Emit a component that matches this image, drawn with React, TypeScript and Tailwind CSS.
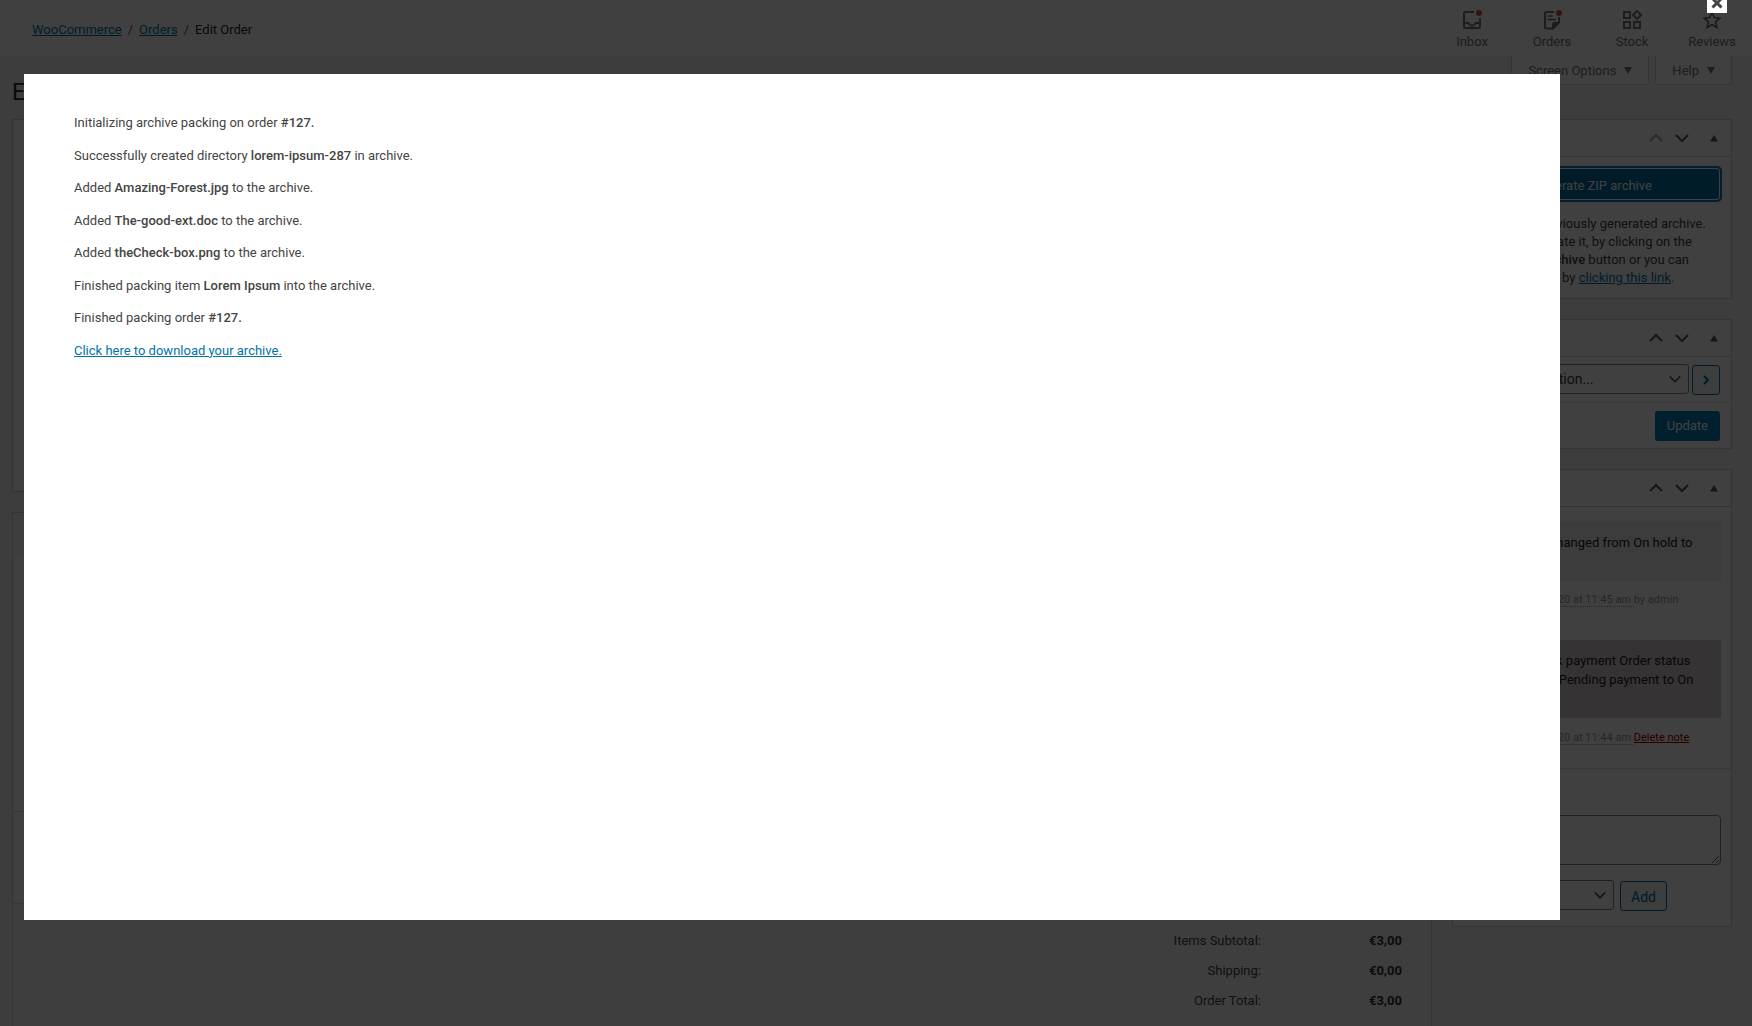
import type { ReactNode } from "react";

const log = [
  { before: "Initializing archive packing on order ", name: "#127.", after: "" },
  { before: "Successfully created directory ", name: "lorem-ipsum-287", after: " in archive." },
  { before: "Added ", name: "Amazing-Forest.jpg", after: " to the archive." },
  { before: "Added ", name: "The-good-ext.doc", after: " to the archive." },
  { before: "Added ", name: "theCheck-box.png", after: " to the archive." },
  { before: "Finished packing item ", name: "Lorem Ipsum", after: " into the archive." },
  { before: "Finished packing order ", name: "#127.", after: "" }
];

const totals = [
  { label: "Items Subtotal:", value: "€3,00" },
  { label: "Shipping:", value: "€0,00" },
  { label: "Order Total:", value: "€3,00" }
];

function InboxIcon() {
  return (
    <svg width="20" height="20" viewBox="0 0 20 20" fill="none" stroke="currentColor" strokeWidth="2">
      <path d="M12 2H3.5Q2 2 2 3.5V16.5Q2 18 3.5 18H16.5Q18 18 18 16.5V8" />
      <path d="M2 13H6.5Q7.5 15.5 10 15.5T13.5 13H18" />
      <circle cx="17" cy="3" r="3" fill="#d94f4f" stroke="none" />
    </svg>
  );
}

function OrdersIcon() {
  return (
    <svg width="20" height="20" viewBox="0 0 20 20" fill="none" stroke="currentColor" strokeWidth="2">
      <path d="M12 2H4.5Q3 2 3 3.5V17Q3 18.5 4.5 18.5H11" />
      <path d="M17 7V13" />
      <path d="M18 12V13L11.5 19.5H10V14Q10 12 12 12Z" fill="currentColor" stroke="none" />
      <path d="M5.5 6H10.5M5.5 9.5H14" strokeWidth="1.5" />
      <circle cx="17" cy="3" r="3" fill="#d94f4f" stroke="none" />
    </svg>
  );
}

function StockIcon() {
  return (
    <svg width="20" height="20" viewBox="0 0 20 20" fill="none" stroke="currentColor" strokeWidth="2">
      <rect x="2" y="2" width="6" height="6" />
      <rect x="2" y="12" width="6" height="6" />
      <rect x="12" y="12" width="6" height="6" />
      <path d="M15 1L19 5L15 9L11 5Z" />
    </svg>
  );
}

function ReviewsIcon() {
  return (
    <svg width="20" height="20" viewBox="0 0 20 20" fill="none" stroke="currentColor" strokeWidth="1.8">
      <path d="M10 2.5L12.3 7.6L17.8 8.2L13.7 11.9L14.9 17.4L10 14.6L5.1 17.4L6.3 11.9L2.2 8.2L7.7 7.6Z" />
    </svg>
  );
}

function Chevron({ direction, className = "" }: { direction: "up" | "down" | "right"; className?: string }) {
  const paths = {
    up: "M2 11L8 5L14 11",
    down: "M2 5L8 11L14 5",
    right: "M6 4L10 8L6 12"
  };
  return (
    <svg width="16" height="16" viewBox="0 0 16 16" fill="none" stroke="currentColor" strokeWidth="2" className={className}>
      <path d={paths[direction]} />
    </svg>
  );
}

function Triangle({ down = false }: { down?: boolean }) {
  return (
    <svg width="8" height="7" viewBox="0 0 8 7" fill="currentColor" className="shrink-0">
      <path d={down ? "M0 0H8L4 7Z" : "M0 6.5H8L4 0Z"} />
    </svg>
  );
}

const activity = [
  { label: "Inbox", icon: <InboxIcon /> },
  { label: "Orders", icon: <OrdersIcon /> },
  { label: "Stock", icon: <StockIcon /> },
  { label: "Reviews", icon: <ReviewsIcon /> }
];

function Panel({ title, first = false, children }: { title: string; first?: boolean; children: ReactNode }) {
  return (
    <section className="border border-[#ccd0d4] bg-white">
      <header className="flex h-[37px] items-center border-b border-[#ccd0d4] pl-3 pr-[13px]">
        <h2 className="flex-1 text-sm font-semibold text-[#23282d]">{title}</h2>
        <button aria-label="Move up" className={first ? "mr-[10px] text-[#a0a5aa]" : "mr-[10px] text-[#50575e]"}>
          <Chevron direction="up" />
        </button>
        <button aria-label="Move down" className="mr-5 text-[#50575e]">
          <Chevron direction="down" />
        </button>
        <button aria-label="Toggle panel" className="text-[#50575e]">
          <Triangle />
        </button>
      </header>
      {children}
    </section>
  );
}

function Select({ label, className, children }: { label: string; className: string; children: ReactNode }) {
  return (
    <div className={`grid ${className}`}>
      <select
        aria-label={label}
        className="col-start-1 row-start-1 h-[30px] appearance-none rounded-[3px] border border-[#7e8993] bg-white pl-2 text-sm text-[#32373c]"
      >
        {children}
      </select>
      <Chevron
        direction="down"
        className="pointer-events-none col-start-1 row-start-1 mr-[7px] h-[14px] w-[14px] self-center justify-self-end text-[#555555]"
      />
    </div>
  );
}

function Sidebar() {
  return (
    <aside className="flex w-[280px] shrink-0 flex-col gap-5">
      <Panel title="Order files" first>
        <div className="px-[11px] pb-[11px] pt-[11px]">
          <button className="h-8 w-full rounded-[3px] border border-white bg-[#0071a1] pt-[3px] text-[13px] text-white ring-2 ring-[#007cba]">
            Generate ZIP archive
          </button>
          <p className="mt-[15px] whitespace-nowrap leading-[18px]">
            There is one previously generated archive.
            <br />
            You can regenerate it, by clicking on the
            <br />
            <b className="font-medium">Generate ZIP archive</b> button or you can
            <br />
            also download it by{" "}
            <a href="#archive" className="text-[#0073aa] underline">clicking this link</a>.
          </p>
        </div>
      </Panel>

      <Panel title="Order actions">
        <div className="flex h-[46px] items-start gap-[3px] border-b border-[#dddddd] pl-3 pr-[11px] pt-[7px]">
          <Select label="Order action" className="flex-1">
            <option>Choose an action...</option>
          </Select>
          <button
            aria-label="Apply action"
            className="mt-px flex h-[30px] w-7 items-center justify-center rounded-[3px] border border-[#0071a1] bg-[#f3f5f6] text-[#0071a1]"
          >
            <Chevron direction="right" />
          </button>
        </div>
        <div className="flex h-[45px] items-center justify-between pl-3 pr-[11px]">
          <a href="#trash" className="text-[#a00] underline">Move to Trash</a>
          <button className="h-[30px] rounded-[3px] bg-[#007cba] px-3 pt-px text-[13px] text-white">Update</button>
        </div>
      </Panel>

      <Panel title="Order notes">
        <ul className="px-[10px] pt-[15px]">
          <li>
            <div className="h-[59px] bg-[#efefef] px-3 py-[11px] leading-5 text-[#222222]">
              Order status changed from On hold to
              <br />
              Processing.
            </div>
            <p className="mt-[11px] h-12 px-3 text-[11px] leading-4 text-[#999999]">
              <abbr className="border-b border-dotted border-[#999999]">November 18, 2020 at 11:45 am </abbr>by admin
            </p>
          </li>
          <li>
            <div className="h-[78px] bg-[#d7cad2] px-3 py-[11px] leading-[19px] text-[#222222]">
              Awaiting check payment Order status
              <br />
              changed from Pending payment to On
              <br />
              hold.
            </div>
            <p className="mt-3 h-[38px] px-3 text-[11px] leading-4 text-[#999999]">
              <abbr className="border-b border-dotted border-[#999999]">November 18, 2020 at 11:44 am </abbr>
              <a href="#delete-note" className="text-[#a00] underline">Delete note</a>
            </p>
          </li>
        </ul>
        <div className="border-t border-[#dddddd] px-[10px] pb-[15px] pt-4">
          <label htmlFor="note" className="block h-[30px] leading-5">Add note</label>
          <textarea id="note" className="block h-[50px] w-full resize rounded border border-[#7e8993] bg-white" />
          <div className="mt-[15px] flex items-start gap-[6px]">
            <Select label="Note type" className="w-[151px]">
              <option value="">Private note</option>
            </Select>
            <button className="mt-px h-[30px] rounded-[3px] border border-[#0071a1] bg-[#f3f5f6] px-[10px] pt-[2px] text-sm text-[#0071a1]">
              Add
            </button>
          </div>
        </div>
      </Panel>
    </aside>
  );
}

function OrderScreen() {
  return (
    <div className="flex h-screen flex-col overflow-hidden bg-[#f1f1f1]">
      <header className="flex h-14 shrink-0 items-center justify-between bg-white pl-8">
        <nav aria-label="Breadcrumb" className="flex gap-[6px] pt-[3px] text-[#555d66]">
          <a href="#woocommerce" className="text-[#0073aa] underline">WooCommerce</a>
          <span>/</span>
          <a href="#orders" className="text-[#0073aa] underline">Orders</a>
          <span>/</span>
          <span className="text-[#23282d]">Edit Order</span>
        </nav>
        <div className="flex">
          {activity.map((item) => (
            <button key={item.label} className="flex w-20 flex-col items-center gap-[2px] pt-[6px] text-[#757575]">
              {item.icon}
              <span className="leading-5">{item.label}</span>
            </button>
          ))}
        </div>
      </header>

      <div className="flex h-[63px] shrink-0 items-start justify-between pl-3 pr-5">
        <h1 className="pt-[22px] text-[23px] leading-[30px] text-[#23282d]">Edit order</h1>
        <div className="flex gap-[6px] text-[#72777c]">
          <button className="flex h-[29px] items-center gap-2 rounded-b border border-t-0 border-[#ccd0d4] bg-white px-4 pt-px">
            Screen Options <Triangle down />
          </button>
          <button className="flex h-[29px] items-center gap-2 rounded-b border border-t-0 border-[#ccd0d4] bg-white px-4 pt-px">
            Help <Triangle down />
          </button>
        </div>
      </div>

      <main className="flex min-h-0 flex-1 gap-5 pl-3 pr-5">
        <div className="flex flex-1 flex-col">
          <section className="h-[373px] shrink-0 border border-[#ccd0d4] bg-white" />
          <section className="mt-5 flex flex-1 flex-col border border-b-0 border-[#ccd0d4] bg-white">
            <div className="h-11 bg-[#f8f8f8]" />
            <div className="h-[255px] border-b border-[#dddddd]" />
            <div className="h-[92px] border-b border-[#dddddd]" />
            <div className="flex flex-1 justify-end bg-[#f8f8f8] pr-[29px] pt-[22px]">
              <table className="h-[90px] self-start text-right">
                <tbody>
                  {totals.map((row) => (
                    <tr key={row.label} className="h-[30px]">
                      <th scope="row" className="text-right font-normal text-[#444444]">{row.label}</th>
                      <td className="w-[141px] font-bold text-[#333333]">{row.value}</td>
                    </tr>
                  ))}
                </tbody>
              </table>
            </div>
          </section>
        </div>
        <Sidebar />
      </main>
    </div>
  );
}

function ArchiveDialog() {
  return (
    <div className="fixed inset-0 flex bg-black/75 pb-[106px] pl-6 pr-48 pt-[74px]">
      <button
        aria-label="Close"
        className="absolute -top-[7px] right-[25px] flex h-5 w-5 items-center justify-center bg-white text-[#444444]"
      >
        <svg width="12" height="12" viewBox="0 0 12 12" fill="none" stroke="currentColor" strokeWidth="3">
          <path d="M1.5 1.5L10.5 10.5M10.5 1.5L1.5 10.5" />
        </svg>
      </button>
      <div role="dialog" aria-label="Archive packing" className="flex-1 bg-white px-[50px] py-[39px]">
        <div className="flex flex-col gap-[13px] leading-[1.5]">
          {log.map((line, i) => (
            <p key={i}>
              {line.before}
              <b className="font-medium">{line.name}</b>
              {line.after}
            </p>
          ))}
          <p>
            <a href="#download" className="text-[#0073aa] underline">Click here to download your archive.</a>
          </p>
        </div>
      </div>
    </div>
  );
}

export default function App() {
  return (
    <div className="font-[Roboto,'Open_Sans',sans-serif] text-[13px] text-[#444444]">
      <OrderScreen />
      <ArchiveDialog />
    </div>
  );
}
